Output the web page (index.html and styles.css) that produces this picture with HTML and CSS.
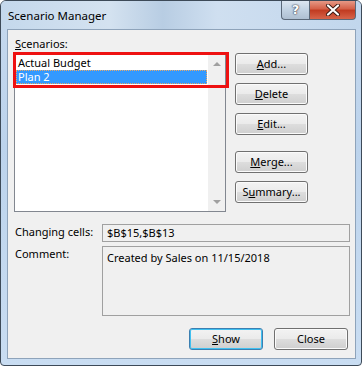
FILE: index.html
```html
<!DOCTYPE html>
<html>
<head>
<meta charset="utf-8">
<link rel="stylesheet" href="styles.css">
</head>
<body>
<div class="window">
  <div class="titlebar">
    <div class="title">Scenario Manager</div>
    <div class="caption">
      <div class="cap-btn help">?</div>
      <div class="cap-btn close">
        <svg width="16" height="12" viewBox="0 0 16 12"><path d="M3 1.5 L13 10.5 M13 1.5 L3 10.5" stroke="#3a1a14" stroke-width="4" stroke-linecap="round"/><path d="M3 1.5 L13 10.5 M13 1.5 L3 10.5" stroke="#fff" stroke-width="2.2" stroke-linecap="round"/></svg>
      </div>
    </div>
  </div>
  <div class="client">
    <div class="top">
      <div class="left">
        <div class="label"><u>S</u>cenarios:</div>
        <div class="listwrap">
          <div class="list">
            <div class="items">
              <div class="item">Actual Budget</div>
              <div class="item sel">Plan 2</div>
            </div>
            <div class="scroll">
              <span class="arrow up"></span>
              <span class="arrow down"></span>
            </div>
          </div>
          <div class="highlight"></div>
        </div>
      </div>
      <div class="buttons">
        <div class="btn"><u>A</u>dd...</div>
        <div class="btn"><u>D</u>elete</div>
        <div class="btn"><u>E</u>dit...</div>
        <div class="btn gap"><u>M</u>erge...</div>
        <div class="btn">S<u>u</u>mmary...</div>
      </div>
    </div>
    <div class="fields">
      <div class="flabel">Changing cells:</div>
      <div class="field one">$B$15,$B$13</div>
      <div class="flabel">Comment:</div>
      <div class="field multi">Created by Sales on 11/15/2018</div>
    </div>
    <div class="footer">
      <div class="btn default"><u>S</u>how</div>
      <div class="btn">Close</div>
    </div>
  </div>
</div>
</body>
</html>
```
FILE: styles.css
```css
html, body {
  margin: 0;
  padding: 0;
  background: #ffffff;
}
body {
  font-family: "Noto Sans", "Open Sans", sans-serif;
  font-size: 11px;
  color: #000;
}
.window {
  width: 362px;
  height: 366px;
  box-sizing: border-box;
  border: 1px solid #3d4a58;
  border-radius: 6px 6px 4px 4px;
  background: linear-gradient(180deg, #c6d9ee 0%, #bcd3ec 40%, #c9ddf2 100%);
  display: flex;
  flex-direction: column;
  overflow: hidden;
}
.titlebar {
  height: 28px;
  display: flex;
  align-items: flex-start;
  background: linear-gradient(90deg, #c4d8ec 0%, #d4e2f0 30%, #b8cde3 45%, #cfdff0 60%, #c1d6ec 100%);
}
.title {
  padding: 7px 0 0 7px;
  font-size: 11.5px;
  line-height: 16px;
  color: #000;
}
.caption {
  margin-left: auto;
  margin-right: 5px;
  margin-top: -1px;
  display: flex;
}
.cap-btn {
  height: 20px;
  box-sizing: border-box;
  border: 1px solid #5a6878;
  border-top: none;
  display: flex;
  align-items: center;
  justify-content: center;
}
.help {
  width: 28px;
  border-radius: 0 0 0 4px;
  border-right: none;
  background: linear-gradient(180deg, #dfe8f2 0%, #c3d3e3 50%, #aebfd1 100%);
  color: #fff;
  font-family: "DejaVu Sans", sans-serif;
  font-weight: bold;
  font-size: 13px;
  text-shadow: 0 0 2px #334, 0 0 1px #223;
}
.close {
  width: 47px;
  border-radius: 0 0 4px 0;
  background: linear-gradient(180deg, #e8a08e 0%, #d5624a 45%, #c13c22 55%, #d7644a 100%);
}
.client {
  flex: 1;
  margin: 0 5px 6px 6px;
  border: 1px solid #8ea3ba;
  background: #f0f0f0;
  padding: 6px 6px 8px 6px;
  display: flex;
  flex-direction: column;
}
.top {
  display: flex;
}
.left {
  display: flex;
  flex-direction: column;
}
.label {
  line-height: 16px;
  height: 16px;
  padding-left: 1px;
}
.listwrap {
  position: relative;
  margin-top: 2px;
}
.list {
  width: 212px;
  height: 158px;
  box-sizing: border-box;
  border: 1px solid #828790;
  background: #fff;
  display: flex;
}
.items {
  flex: 1;
  padding: 1px 1px 0 1px;
}
.item {
  height: 14px;
  line-height: 14px;
  padding-left: 2px;
}
.item.sel {
  background: #3399ff;
  color: #fff;
  outline: 1px dotted #e8a868;
  outline-offset: -1px;
}
.scroll {
  width: 17px;
  background: #f0f0f0;
  display: flex;
  flex-direction: column;
  justify-content: space-between;
  align-items: center;
  padding: 7px 0;
}
.arrow {
  width: 0;
  height: 0;
  border-left: 4px solid transparent;
  border-right: 4px solid transparent;
}
.arrow.up { border-bottom: 4px solid #a0a0a0; }
.arrow.down { border-top: 4px solid #a0a0a0; }
.highlight {
  position: absolute;
  left: -1px;
  top: -2px;
  width: 216px;
  height: 36px;
  box-sizing: border-box;
  border: 3px solid #ee1111;
}
.buttons {
  margin-left: 9px;
  margin-top: 17px;
  display: flex;
  flex-direction: column;
  gap: 8px;
}
.buttons .gap {
  margin-top: 8px;
}
.btn {
  width: 73px;
  height: 22px;
  box-sizing: border-box;
  border: 1px solid #707070;
  border-radius: 3px;
  background: linear-gradient(180deg, #f3f3f3 0%, #ebebeb 48%, #dddddd 52%, #cfcfcf 100%);
  box-shadow: inset 0 0 0 1px #fbfbfb;
  display: flex;
  align-items: center;
  justify-content: center;
  line-height: 14px;
}
.fields {
  margin-top: 12px;
  display: grid;
  grid-template-columns: 88px 248px;
  row-gap: 4px;
}
.flabel {
  padding-left: 1px;
  line-height: 16px;
}
.field {
  box-sizing: border-box;
  border: 1px solid #a0a0a0;
  padding: 1px 4px;
  line-height: 14px;
}
.field.one {
  height: 18px;
}
.field.multi {
  height: 70px;
  padding-top: 4px;
}
.footer {
  margin-top: 12px;
  display: flex;
  justify-content: flex-end;
  gap: 11px;
  padding-right: 1px;
}
.footer .btn {
  width: 74px;
  height: 22px;
}
.btn.default {
  border-color: #3c7fb1;
  box-shadow: inset 0 0 0 1px #40c0f0;
}
```
